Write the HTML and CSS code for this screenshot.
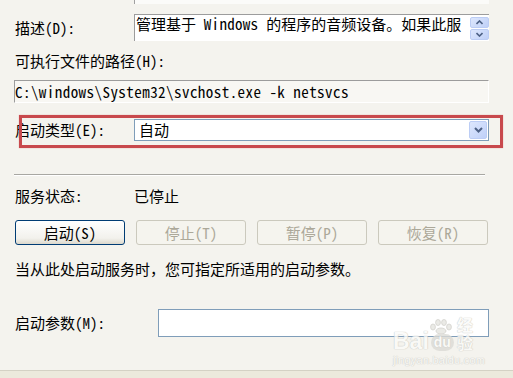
FILE: index.html
```html
<!DOCTYPE html>
<html lang="zh-CN">
<head>
    <meta charset="UTF-8">
    <meta name="viewport" content="width=device-width, initial-scale=1.0">
    <title>服务属性</title>
    <link rel="stylesheet" href="styles.css">
</head>
<body>
    <div class="dialog">
        <!-- bottom edge of the display name box, scrolled off the top -->
        <div class="name-stub"></div>

        <div class="field-row desc-row">
            <label class="field-label">描述(D):</label>
            <div class="desc-box">
                <div class="desc-text">管理基于<span class="latin"> Windows </span>的程序的音频设备。如果此服</div>
                <div class="scroll-btns">
                    <span class="xp-btn scroll-btn">
                        <svg width="7" height="5" viewBox="0 0 7 5"><polyline points="0.5,4 3.5,1 6.5,4" fill="none" stroke="#4d6185" stroke-width="1.6"/></svg>
                    </span>
                    <span class="xp-btn scroll-btn">
                        <svg width="7" height="5" viewBox="0 0 7 5"><polyline points="0.5,1 3.5,4 6.5,1" fill="none" stroke="#4d6185" stroke-width="1.6"/></svg>
                    </span>
                </div>
            </div>
        </div>

        <div class="path-label">可执行文件的路径(H):</div>
        <div class="path-box">C:\windows\System32\svchost.exe -k netsvcs</div>

        <div class="field-row startup-row">
            <label class="field-label">启动类型(E):</label>
            <div class="combo">
                <span class="combo-value">自动</span>
                <span class="xp-btn combo-btn">
                    <svg width="9" height="6" viewBox="0 0 9 6"><polyline points="1,1 4.5,4.5 8,1" fill="none" stroke="#4d6185" stroke-width="2"/></svg>
                </span>
            </div>
            <div class="highlight"></div>
        </div>

        <div class="separator"></div>

        <div class="status-row">
            <span class="field-label">服务状态:</span>
            <span>已停止</span>
        </div>

        <div class="button-row">
            <button class="btn" type="button">启动(S)</button>
            <button class="btn" type="button" disabled>停止(T)</button>
            <button class="btn" type="button" disabled>暂停(P)</button>
            <button class="btn" type="button" disabled>恢复(R)</button>
        </div>

        <p class="hint">当从此处启动服务时，您可指定所适用的启动参数。</p>

        <div class="field-row param-row">
            <label class="param-label" for="params">启动参数(M):</label>
            <input class="param-input" type="text" id="params">
        </div>

        <!-- site watermark -->
        <div class="watermark">
            <div class="wm-logo">
                <span class="wm-bai">Bai</span>
                <span class="wm-du">du
                    <svg class="wm-paw" width="22" height="15" viewBox="0 0 22 15">
                        <ellipse cx="3" cy="8" rx="2.4" ry="3" />
                        <ellipse cx="8" cy="3.5" rx="2.4" ry="3" />
                        <ellipse cx="14" cy="3.5" rx="2.4" ry="3" />
                        <ellipse cx="19" cy="8" rx="2.4" ry="3" />
                        <ellipse cx="11" cy="12" rx="5" ry="3" />
                    </svg>
                </span>
                <span class="wm-jy">经验</span>
            </div>
            <div class="wm-url">jingyan.baidu.com</div>
        </div>
    </div>
    <div class="bottom-band"></div>
</body>
</html>
```

FILE: styles.css
```css
* {
    box-sizing: border-box;
}

html, body {
    margin: 0;
    padding: 0;
}

body {
    height: 378px;
    overflow: hidden;
    display: flex;
    flex-direction: column;
    background-color: #f4f3ee;
    font-family: "Noto Sans Mono CJK SC", "Noto Sans CJK SC", sans-serif;
    font-size: 15px;
    line-height: 16px;
    color: #000;
}

.dialog {
    position: relative;
    flex: 1;
    padding-left: 14px;
}

.name-stub {
    margin-left: 120px;
    width: 355px;
    height: 4px;
    border-left: 1px solid #a0a0a0;
    background-color: #fbfbf9;
}

.field-row {
    display: flex;
    align-items: center;
}

.field-label {
    width: 120px;
    padding-left: 1px;
    flex-shrink: 0;
}

/* description */
.desc-row {
    margin-top: 10px;
    height: 27px;
}

.desc-box {
    display: flex;
    justify-content: space-between;
    width: 355px;
    height: 27px;
    padding: 1px 0 0 1px;
    border-top: 1px solid #9c9c9c;
    border-left: 1px solid #9c9c9c;
    background-color: #fff;
}

.desc-text {
    flex: none;
    white-space: nowrap;
}

.latin {
    letter-spacing: 0.3px;
}

.scroll-btns {
    display: flex;
    flex-direction: column;
    gap: 1px;
    padding-top: 1px;
}

.xp-btn {
    display: flex;
    align-items: center;
    justify-content: center;
    border: 1px solid #bccdf5;
    border-radius: 2px;
    background: linear-gradient(135deg, #dde7fd, #bfd0f8);
}

.scroll-btn {
    width: 19px;
    height: 11px;
}

/* executable path */
.path-label {
    margin-top: 12px;
    padding-left: 1px;
}

.path-box {
    margin-top: 11px;
    width: 475px;
    height: 23px;
    line-height: 21px;
    letter-spacing: 0.45px;
    border-top: 1px solid #9c9c9c;
    border-left: 1px solid #9c9c9c;
    border-right: 1px solid #fff;
    border-bottom: 1px solid #fff;
    background-color: #f8f7f3;
    white-space: nowrap;
}

/* startup type */
.startup-row {
    position: relative;
    margin-top: 16px;
    height: 22px;
}

.combo {
    display: flex;
    align-items: center;
    justify-content: space-between;
    width: 355px;
    height: 22px;
    padding: 0 1px 0 4px;
    border: 1px solid #7f9db9;
    background-color: #fff;
}

.combo-btn {
    width: 18px;
    height: 18px;
}

.highlight {
    position: absolute;
    left: 5px;
    top: -4px;
    width: 484px;
    height: 33px;
    border: 3px solid #c8494d;
    box-shadow: 0 0 1px rgba(200, 73, 77, 0.5);
}

.separator {
    margin-top: 33px;
    width: 471px;
    height: 2px;
    border-top: 1px solid #a8a7a2;
    border-bottom: 1px solid #fff;
}

/* service status */
.status-row {
    display: flex;
    margin-top: 12px;
}

.button-row {
    display: flex;
    gap: 11px;
    margin-top: 16px;
    padding-left: 1px;
}

.btn {
    width: 110px;
    height: 25px;
    padding: 0;
    font: inherit;
    color: #000;
    border: 1px solid #003c74;
    border-radius: 3px;
    background: linear-gradient(#fff, #f2f1ec 75%, #dcd8cc);
}

.btn:disabled {
    color: #aca899;
    border-color: #cbc9bd;
    background: #f5f4ee;
}

.hint {
    margin: 16px 0 0 1px;
}

/* start parameters */
.param-row {
    margin-top: 32px;
    height: 28px;
}

.param-label {
    width: 144px;
    padding-left: 1px;
    flex-shrink: 0;
}

.param-input {
    width: 331px;
    height: 28px;
    margin: 0;
    border: 1px solid #7f9db9;
    background-color: #fff;
}

.bottom-band {
    height: 8px;
    border-top: 1px solid #d4d1c4;
    background-color: #ece9dc;
}

/* watermark */
.watermark {
    position: absolute;
    left: 393px;
    top: 321px;
    width: 92px;
    color: #fbfbf9;
    text-shadow: 0 0 1px #c2c1bb, 0 0 1px #c2c1bb;
    font-family: "Liberation Sans", sans-serif;
    opacity: 0.8;
}

.wm-logo {
    display: flex;
    align-items: flex-end;
    height: 30px;
}

.wm-bai {
    font-size: 23px;
    font-weight: bold;
    line-height: 20px;
}

.wm-du {
    position: relative;
    margin-left: 2px;
    padding: 0 3px;
    font-size: 14px;
    font-weight: bold;
    line-height: 17px;
    border-radius: 9px;
    background-color: #dcdbd6;
}

.wm-paw {
    position: absolute;
    left: -1px;
    top: -15px;
    fill: #e6e5e0;
    stroke: #c9c8c2;
    stroke-width: 0.8;
}

.wm-jy {
    margin-left: 3px;
    font-family: "Noto Sans CJK SC", sans-serif;
    font-size: 16px;
    font-weight: bold;
    line-height: 18px;
}

.wm-url {
    margin-top: 4px;
    font-size: 11px;
    line-height: 10px;
    letter-spacing: 0.2px;
}
```
